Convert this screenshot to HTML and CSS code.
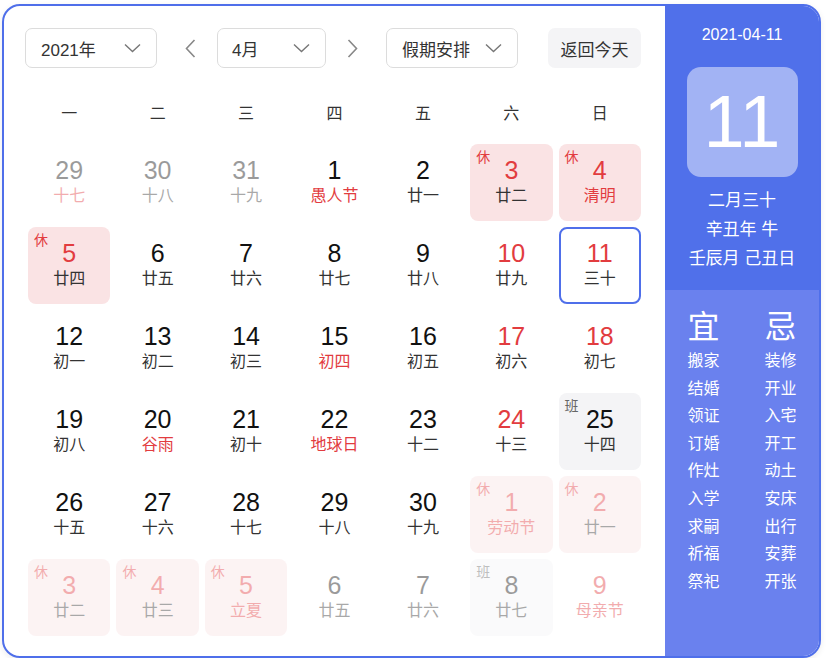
FILE: index.html
```html
<!DOCTYPE html>
<html lang="zh-CN">
<head>
<meta charset="utf-8">
<title>万年历</title>
<link rel="stylesheet" href="styles.css">
</head>
<body>
<div class="calendar">
  <div class="main">
    <div class="toolbar">
      <div class="select sel-year"><span>2021年</span><svg class="chev" width="17" height="10" viewBox="0 0 17 10"><path d="M1 1.5 L8.5 8.5 L16 1.5" /></svg></div>
      <div class="arrow arrow-prev"><svg width="11" height="19" viewBox="0 0 11 19"><path d="M9.5 1 L1.5 9.5 L9.5 18" /></svg></div>
      <div class="select sel-month"><span>4月</span><svg class="chev" width="17" height="10" viewBox="0 0 17 10"><path d="M1 1.5 L8.5 8.5 L16 1.5" /></svg></div>
      <div class="arrow arrow-next"><svg width="11" height="19" viewBox="0 0 11 19"><path d="M1.5 1 L9.5 9.5 L1.5 18" /></svg></div>
      <div class="select sel-holiday"><span>假期安排</span><svg class="chev" width="17" height="10" viewBox="0 0 17 10"><path d="M1 1.5 L8.5 8.5 L16 1.5" /></svg></div>
      <div class="today-btn">返回今天</div>
    </div>
    <div class="weekdays">
      <div>一</div><div>二</div><div>三</div><div>四</div><div>五</div><div>六</div><div>日</div>
    </div>
    <div class="grid">
      <div class="cell other"><div class="num">29</div><div class="lunar red">十七</div></div>
      <div class="cell other"><div class="num">30</div><div class="lunar">十八</div></div>
      <div class="cell other"><div class="num">31</div><div class="lunar">十九</div></div>
      <div class="cell"><div class="num">1</div><div class="lunar red">愚人节</div></div>
      <div class="cell"><div class="num">2</div><div class="lunar">廿一</div></div>
      <div class="cell rest"><span class="tag">休</span><div class="num red">3</div><div class="lunar">廿二</div></div>
      <div class="cell rest"><span class="tag">休</span><div class="num red">4</div><div class="lunar red">清明</div></div>

      <div class="cell rest"><span class="tag">休</span><div class="num red">5</div><div class="lunar">廿四</div></div>
      <div class="cell"><div class="num">6</div><div class="lunar">廿五</div></div>
      <div class="cell"><div class="num">7</div><div class="lunar">廿六</div></div>
      <div class="cell"><div class="num">8</div><div class="lunar">廿七</div></div>
      <div class="cell"><div class="num">9</div><div class="lunar">廿八</div></div>
      <div class="cell"><div class="num red">10</div><div class="lunar">廿九</div></div>
      <div class="cell today"><div class="num red">11</div><div class="lunar">三十</div></div>

      <div class="cell"><div class="num">12</div><div class="lunar">初一</div></div>
      <div class="cell"><div class="num">13</div><div class="lunar">初二</div></div>
      <div class="cell"><div class="num">14</div><div class="lunar">初三</div></div>
      <div class="cell"><div class="num">15</div><div class="lunar red">初四</div></div>
      <div class="cell"><div class="num">16</div><div class="lunar">初五</div></div>
      <div class="cell"><div class="num red">17</div><div class="lunar">初六</div></div>
      <div class="cell"><div class="num red">18</div><div class="lunar">初七</div></div>

      <div class="cell"><div class="num">19</div><div class="lunar">初八</div></div>
      <div class="cell"><div class="num">20</div><div class="lunar red">谷雨</div></div>
      <div class="cell"><div class="num">21</div><div class="lunar">初十</div></div>
      <div class="cell"><div class="num">22</div><div class="lunar red">地球日</div></div>
      <div class="cell"><div class="num">23</div><div class="lunar">十二</div></div>
      <div class="cell"><div class="num red">24</div><div class="lunar">十三</div></div>
      <div class="cell work"><span class="tag">班</span><div class="num">25</div><div class="lunar">十四</div></div>

      <div class="cell"><div class="num">26</div><div class="lunar">十五</div></div>
      <div class="cell"><div class="num">27</div><div class="lunar">十六</div></div>
      <div class="cell"><div class="num">28</div><div class="lunar">十七</div></div>
      <div class="cell"><div class="num">29</div><div class="lunar">十八</div></div>
      <div class="cell"><div class="num">30</div><div class="lunar">十九</div></div>
      <div class="cell rest other"><span class="tag">休</span><div class="num red">1</div><div class="lunar red">劳动节</div></div>
      <div class="cell rest other"><span class="tag">休</span><div class="num red">2</div><div class="lunar">廿一</div></div>

      <div class="cell rest other"><span class="tag">休</span><div class="num red">3</div><div class="lunar">廿二</div></div>
      <div class="cell rest other"><span class="tag">休</span><div class="num red">4</div><div class="lunar">廿三</div></div>
      <div class="cell rest other"><span class="tag">休</span><div class="num red">5</div><div class="lunar red">立夏</div></div>
      <div class="cell other"><div class="num">6</div><div class="lunar">廿五</div></div>
      <div class="cell other"><div class="num">7</div><div class="lunar">廿六</div></div>
      <div class="cell work other"><span class="tag">班</span><div class="num">8</div><div class="lunar">廿七</div></div>
      <div class="cell other"><div class="num red">9</div><div class="lunar red">母亲节</div></div>
    </div>
  </div>
  <div class="side">
    <div class="side-top">
      <div class="side-date">2021-04-11</div>
      <div class="big-day">11</div>
      <div class="side-lunar">
        <div>二月三十</div>
        <div>辛丑年 牛</div>
        <div>壬辰月 己丑日</div>
      </div>
    </div>
    <div class="side-bottom">
      <div class="col">
        <div class="col-head">宜</div>
        <div>搬家</div><div>结婚</div><div>领证</div><div>订婚</div><div>作灶</div><div>入学</div><div>求嗣</div><div>祈福</div><div>祭祀</div>
      </div>
      <div class="col">
        <div class="col-head">忌</div>
        <div>装修</div><div>开业</div><div>入宅</div><div>开工</div><div>动土</div><div>安床</div><div>出行</div><div>安葬</div><div>开张</div>
      </div>
    </div>
  </div>
</div>
</body>
</html>
```

FILE: styles.css
```css
* { box-sizing: border-box; }
html, body { margin: 0; padding: 0; background: #ffffff; }
body {
  font-family: "Liberation Sans", "Noto Sans CJK SC", Arial, sans-serif;
  color: #333;
  padding: 4px 0 0 2px;
}
.calendar {
  width: 819px;
  height: 654px;
  border: 2px solid #4f6fea;
  border-radius: 18px;
  overflow: hidden;
  display: flex;
  background: #fff;
  box-shadow: 0 2px 6px rgba(0, 0, 0, 0.08);
}
.main {
  width: 661px;
  padding: 22px 24px 0 24px;
}
.toolbar {
  display: flex;
  align-items: center;
  height: 40px;
  margin-left: -3px;
}
.select {
  height: 40px;
  border: 1px solid #dcdcdc;
  border-radius: 7px;
  display: flex;
  align-items: center;
  justify-content: space-between;
  padding: 0 15px 0 15px;
  font-size: 17px;
  color: #333;
}
.sel-year { width: 132px; }
.sel-month { width: 109px; padding-left: 14px; }
.sel-holiday { width: 132px; }
.chev path { fill: none; stroke: #777; stroke-width: 1.4; }
.arrow { display: flex; align-items: center; }
.arrow path { fill: none; stroke: #888; stroke-width: 1.6; }
.arrow-prev { margin: 0 21px 0 28px; }
.arrow-next { margin: 0 28px 0 21px; }
.today-btn {
  margin-left: auto;
  width: 93px;
  height: 40px;
  border-radius: 7px;
  background: #f4f4f6;
  display: flex;
  align-items: center;
  justify-content: center;
  font-size: 17px;
  color: #333;
}
.weekdays {
  display: grid;
  grid-template-columns: repeat(7, 1fr);
  column-gap: 6px;
  margin-top: 31px;
  height: 30px;
  line-height: 30px;
  text-align: center;
  font-size: 16px;
  color: #333;
  margin-bottom: 15px;
}
.grid {
  display: grid;
  grid-template-columns: repeat(7, 1fr);
  grid-auto-rows: 77px;
  gap: 6px;
}
.cell {
  position: relative;
  border-radius: 8px;
  text-align: center;
  padding-top: 12px;
  border: 2px solid transparent;
}
.cell .num {
  font-size: 25px;
  line-height: 28px;
  color: #111;
  margin-top: -2px;
}
.cell .lunar {
  font-size: 16px;
  line-height: 24px;
  color: #333;
}
.cell .red { color: #e23c3f; }
.cell .tag {
  position: absolute;
  top: 3px;
  left: 4px;
  font-size: 14px;
  line-height: 16px;
  color: #e23c3f;
}
.cell.rest { background: #fae3e4; }
.cell.work { background: #f4f4f6; }
.cell.work .tag { color: #666; }
.cell.today { border-color: #4f6fea; }
.cell.other { opacity: 0.42; }
.side {
  width: 154px;
  display: flex;
  flex-direction: column;
  color: #fff;
}
.side-top {
  height: 284px;
  background: #5070ea;
  display: flex;
  flex-direction: column;
  align-items: center;
  padding-top: 17px;
}
.side-date {
  font-size: 16px;
  line-height: 24px;
}
.big-day {
  margin-top: 20px;
  width: 111px;
  height: 110px;
  border-radius: 14px;
  background: rgba(255, 255, 255, 0.47);
  font-size: 74px;
  line-height: 110px;
  text-align: center;
}
.side-lunar {
  margin-top: 9px;
  font-size: 17px;
  line-height: 29px;
  text-align: center;
}
.side-bottom {
  flex: 1;
  background: #6a81ee;
  display: flex;
  padding-top: 17px;
}
.col {
  flex: 1;
  text-align: center;
  font-size: 16px;
  line-height: 27.6px;
}
.col-head {
  font-size: 32px;
  line-height: 40px;
}
```
